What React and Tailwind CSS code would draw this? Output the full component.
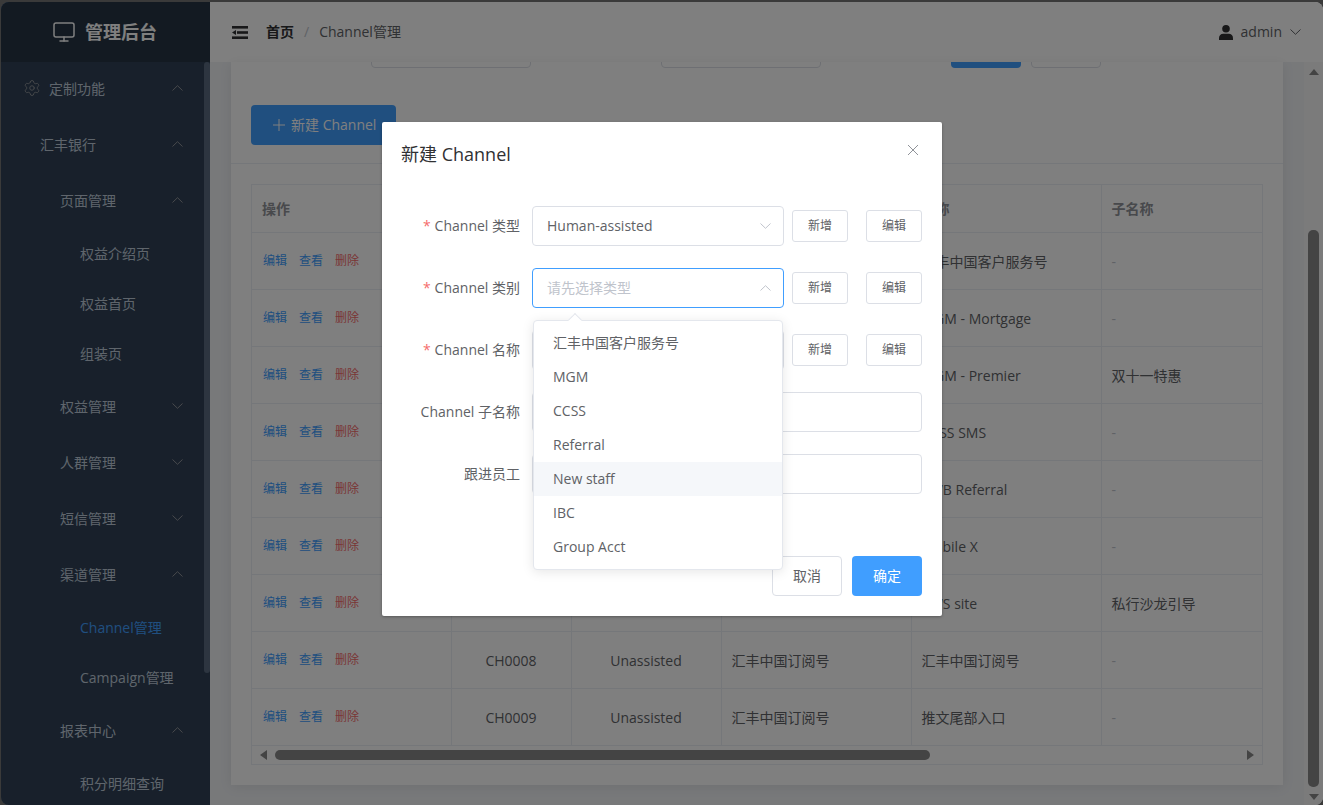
import { Monitor, Settings } from 'lucide-react';

const menu = [
  { label: '定制功能', level: 0, open: true, icon: true },
  { label: '汇丰银行', level: 1, open: true },
  { label: '页面管理', level: 2, open: true },
  { label: '权益介绍页', level: 3 },
  { label: '权益首页', level: 3 },
  { label: '组装页', level: 3 },
  { label: '权益管理', level: 2, open: false },
  { label: '人群管理', level: 2, open: false },
  { label: '短信管理', level: 2, open: false },
  { label: '渠道管理', level: 2, open: true },
  { label: 'Channel管理', level: 3, active: true },
  { label: 'Campaign管理', level: 3 },
  { label: '报表中心', level: 2, open: true },
  { label: '积分明细查询', level: 3 }
];

// the first three data columns of the upper rows sit behind the dialog
const rows = [
  ['', '', '', '汇丰中国客户服务号', '-'],
  ['', '', '', 'MGM - Mortgage', '-'],
  ['', '', '', 'MGM - Premier', '双十一特惠'],
  ['', '', '', 'CCSS SMS', '-'],
  ['', '', '', 'PWB Referral', '-'],
  ['', '', '', 'Mobile X', '-'],
  ['', '', '', 'PWS site', '私行沙龙引导'],
  ['CH0008', 'Unassisted', '汇丰中国订阅号', '汇丰中国订阅号', '-'],
  ['CH0009', 'Unassisted', '汇丰中国订阅号', '推文尾部入口', '-']
];

const options = ['汇丰中国客户服务号', 'MGM', 'CCSS', 'Referral', 'New staff', 'IBC', 'Group Acct'];

const Chevron = ({ up, className }) => (
  <svg viewBox="0 0 11 6" fill="none" stroke="currentColor" strokeWidth="1" className={className}>
    <polyline points={up ? '0.5,5.5 5.5,0.7 10.5,5.5' : '0.5,0.5 5.5,5.3 10.5,0.5'} />
  </svg>
);

const FoldIcon = () => (
  <svg viewBox="0 0 16 13" fill="#303133" className="w-4 h-[13px]">
    <rect x="0" y="0" width="16" height="2.6" />
    <rect x="5" y="5.2" width="11" height="2.6" />
    <polygon points="0,6.5 4,4 4,9" />
    <rect x="0" y="10.4" width="16" height="2.6" />
  </svg>
);

const UserIcon = () => (
  <svg viewBox="0 0 14 15" fill="#303133" className="w-[14px] h-[15px]">
    <circle cx="7" cy="3.8" r="3.8" />
    <path d="M0 13.2C0 10.6 1.8 8.8 4.2 8.8H9.8C12.2 8.8 14 10.6 14 13.2V15H0Z" />
  </svg>
);

const SideItem = ({ item }) => {
  const isGroup = item.open !== undefined;
  const indent = { 0: 'pl-[22px]', 1: 'pl-[39px]', 2: 'pl-[59px]', 3: 'pl-[79px]' }[item.level];
  return (
    <div
      className={`flex items-center text-sm pr-[21px] ${indent} ${isGroup ? 'h-[56px]' : 'h-[50px]'} ${
        item.active ? 'text-[#409eff]' : 'text-[#bfcbd9]'
      }`}
    >
      {item.icon && <Settings className="w-[18px] h-[18px] mr-[8px] text-[#909399]" strokeWidth={1.25} />}
      <span className="flex-1 pt-[2px]">{item.label}</span>
      {isGroup && <Chevron up={item.open} className="w-[11px] h-[6px] text-[#909399]" />}
    </div>
  );
};

const Sidebar = () => (
  <aside className="w-[209px] shrink-0 flex flex-col bg-[#304156] relative">
    <div className="h-[60px] shrink-0 bg-[#263445] flex items-center justify-center gap-[9px] pr-[2px] z-10">
      <Monitor className="w-6 h-6 text-white" strokeWidth={1.5} />
      <span className="text-white font-bold text-lg">管理后台</span>
    </div>
    <div className="flex-1 overflow-hidden">
      <div className="-mt-[2px] pr-[6px]">
        {menu.map((item) => (
          <SideItem key={item.label} item={item} />
        ))}
      </div>
    </div>
    <div className="absolute right-0 top-[60px] w-[6px] h-[611px] rounded-[3px] bg-[#5a6a80]" />
  </aside>
);

const TopBar = () => (
  <header className="h-[60px] shrink-0 bg-white flex items-center pl-[22px] pr-[22px] text-sm">
    <FoldIcon />
    <span className="ml-[18px] font-bold text-[#303133]">首页</span>
    <span className="mx-[10px] text-[#c0c4cc]">/</span>
    <span className="text-[#606266]">Channel管理</span>
    <div className="ml-auto flex items-center text-[#606266]">
      <UserIcon />
      <span className="ml-2">admin</span>
      <Chevron className="w-[11px] h-[6px] ml-2" />
    </div>
  </header>
);

const DataTable = () => (
  <div className="mx-5 mt-[20px] border border-[#ebeef5] text-sm text-[#606266]">
    <table className="w-full table-fixed border-collapse">
      <colgroup>
        <col className="w-[199px]" />
        <col className="w-[120px]" />
        <col className="w-[150px]" />
        <col className="w-[190px]" />
        <col className="w-[190px]" />
        <col />
      </colgroup>
      <thead>
        <tr className="h-[47px] border-b border-[#ebeef5] text-left font-bold text-[#909399]">
          <th className="px-[10px] pt-[2px] border-r border-[#ebeef5]">操作</th>
          <th className="border-r border-[#ebeef5]" />
          <th className="border-r border-[#ebeef5]" />
          <th className="border-r border-[#ebeef5]" />
          <th className="px-[10px] pt-[2px] border-r border-[#ebeef5]">名称</th>
          <th className="px-[10px] pt-[2px]">子名称</th>
        </tr>
      </thead>
      <tbody>
        {rows.map((row, index) => (
          <tr key={index} className="h-[57px] border-b border-[#ebeef5]">
            <td className="px-[11px] border-r border-[#ebeef5]">
              <div className="flex gap-3 text-xs">
                <span className="text-[#409eff]">编辑</span>
                <span className="text-[#409eff]">查看</span>
                <span className="text-[#f56c6c]">删除</span>
              </div>
            </td>
            <td className="px-[10px] pt-[2px] border-r border-[#ebeef5] text-center">{row[0]}</td>
            <td className="px-[10px] pt-[2px] border-r border-[#ebeef5] text-center">{row[1]}</td>
            <td className="px-[10px] pt-[2px] border-r border-[#ebeef5]">{row[2]}</td>
            <td className="px-[10px] pt-[2px] border-r border-[#ebeef5]">{row[3]}</td>
            <td className={`px-[10px] pt-[2px] ${row[4] === '-' ? 'text-[#c0c4cc]' : ''}`}>{row[4]}</td>
          </tr>
        ))}
      </tbody>
    </table>
    <div className="h-[18px] flex items-center px-[8px]">
      <div className="w-0 h-0 border-y-[5px] border-y-transparent border-r-[7px] border-r-[#888]" />
      <div className="ml-[8px] w-[655px] h-[10px] rounded-[5px] bg-[#888]" />
      <div className="ml-auto w-0 h-0 border-y-[5px] border-y-transparent border-l-[7px] border-l-[#888]" />
    </div>
  </div>
);

const MainContent = () => (
  <div className="flex-1 flex min-h-0">
    <div className="flex-1 min-w-0 bg-[#f0f2f5] pl-[21px] pr-[21px] pb-[20px] flex">
      <div className="flex-1 bg-white shadow-[0_2px_12px_rgba(0,0,0,0.08)]">
        <div className="h-[6px] flex items-end overflow-hidden">
          <div className="ml-[140px] w-[160px] h-10 shrink-0 border border-[#dcdfe6] rounded" />
          <div className="ml-[130px] w-[160px] h-10 shrink-0 border border-[#dcdfe6] rounded" />
          <div className="ml-[130px] w-[70px] h-10 shrink-0 bg-[#409eff] rounded" />
          <div className="ml-[10px] w-[70px] h-10 shrink-0 border border-[#dcdfe6] rounded" />
        </div>
        <div className="px-5 pt-[37px] pb-[18px] border-b border-[#ebeef5]">
          <button className="w-[145px] h-10 bg-[#409eff] rounded text-white text-sm flex items-center pl-[22px] gap-[6px]">
            <svg viewBox="0 0 12 12" stroke="currentColor" strokeWidth="1" className="w-3 h-3">
              <path d="M6 0V12M0 6H12" />
            </svg>
            新建 Channel
          </button>
        </div>
        <DataTable />
      </div>
    </div>
    <div className="w-[19px] shrink-0 bg-[#f7f7f7] flex flex-col items-center pt-[7px] pb-[5px]">
      <div className="w-0 h-0 border-x-[5px] border-x-transparent border-b-[6px] border-b-[#888]" />
      <div className="mt-[155px] w-[11px] flex-1 rounded-[5px] bg-[#888]" />
      <div className="mt-[7px] w-0 h-0 border-x-[5px] border-x-transparent border-t-[6px] border-t-[#888]" />
    </div>
  </div>
);

const SmallButton = ({ children }) => (
  <button className="w-[56px] h-8 shrink-0 border border-[#dcdfe6] rounded-[3px] text-xs text-[#606266] bg-white">
    {children}
  </button>
);

const FormRow = ({ label, required, children }) => (
  <div className="flex items-center h-10 mb-[22px]">
    <label className="w-[150px] pr-3 text-right text-sm text-[#606266] shrink-0">
      {required && <span className="text-[#f56c6c] mr-1">*</span>}
      {label}
    </label>
    {children}
  </div>
);

const SelectBox = ({ value, placeholder, focused, children }) => (
  <div
    className={`relative w-[252px] h-10 shrink-0 border rounded flex items-center pl-[14px] pr-[12px] text-sm ${
      focused ? 'border-[#409eff]' : 'border-[#dcdfe6]'
    }`}
  >
    <span className={`flex-1 ${value ? 'text-[#606266]' : 'text-[#c0c4cc]'}`}>{value || placeholder}</span>
    <Chevron up={focused} className="w-[11px] h-[6px] text-[#c0c4cc]" />
    {children}
  </div>
);

const Dropdown = () => (
  <div className="absolute left-0 top-[51px] w-[250px] bg-white border border-[#e4e7ed] rounded py-[5px] shadow-[0_2px_12px_rgba(0,0,0,0.1)] z-10">
    <div className="absolute -top-[6px] left-[36px] w-[10px] h-[10px] rotate-45 bg-white border-l border-t border-[#e4e7ed]" />
    {options.map((option) => (
      <div
        key={option}
        className={`relative h-[34px] px-[19px] flex items-center text-sm text-[#606266] ${
          option === 'New staff' ? 'bg-[#f5f7fa]' : ''
        }`}
      >
        {option}
      </div>
    ))}
  </div>
);

const ActionButtons = () => (
  <div className="flex ml-2 gap-[18px]">
    <SmallButton>新增</SmallButton>
    <SmallButton>编辑</SmallButton>
  </div>
);

const ChannelModal = () => (
  <div className="absolute inset-0 bg-black/50 z-20">
    <div className="ml-[381px] mt-[120px] w-[560px] h-[494px] bg-white rounded-[2px] shadow-[0_1px_3px_rgba(0,0,0,0.3)] relative flex flex-col">
      <div className="h-[64px] pl-[19px] pt-[18px] text-lg text-[#303133] leading-[28px]">新建 Channel</div>
      <svg viewBox="0 0 10 10" stroke="#909399" strokeWidth="1" className="absolute top-[23px] right-[24px] w-[10px] h-[10px]">
        <path d="M0 0L10 10M10 0L0 10" />
      </svg>
      <div className="pt-[20px] pr-[20px] flex-1">
        <FormRow label="Channel 类型" required>
          <SelectBox value="Human-assisted" />
          <ActionButtons />
        </FormRow>
        <FormRow label="Channel 类别" required>
          <SelectBox placeholder="请先选择类型" focused>
            <Dropdown />
          </SelectBox>
          <ActionButtons />
        </FormRow>
        <FormRow label="Channel 名称" required>
          <SelectBox />
          <ActionButtons />
        </FormRow>
        <FormRow label="Channel 子名称">
          <div className="flex-1 h-10 border border-[#dcdfe6] rounded" />
        </FormRow>
        <FormRow label="跟进员工">
          <div className="flex-1 h-10 border border-[#dcdfe6] rounded" />
        </FormRow>
      </div>
      <div className="flex justify-end gap-[10px] pr-[20px] pb-[20px]">
        <button className="w-[70px] h-10 border border-[#dcdfe6] rounded text-sm text-[#606266]">取消</button>
        <button className="w-[70px] h-10 bg-[#409eff] rounded text-sm text-white">确定</button>
      </div>
    </div>
  </div>
);

export default function App() {
  return (
    <div
      className="h-screen overflow-hidden bg-[#3a3a3a] pt-[2px] pl-px"
      style={{ fontFamily: '"Open Sans", "Noto Sans CJK SC", sans-serif' }}
    >
      <div className="relative h-full rounded-lg overflow-hidden flex">
        <Sidebar />
        <main className="flex-1 min-w-0 flex flex-col">
          <TopBar />
          <MainContent />
        </main>
        <ChannelModal />
      </div>
    </div>
  );
}
